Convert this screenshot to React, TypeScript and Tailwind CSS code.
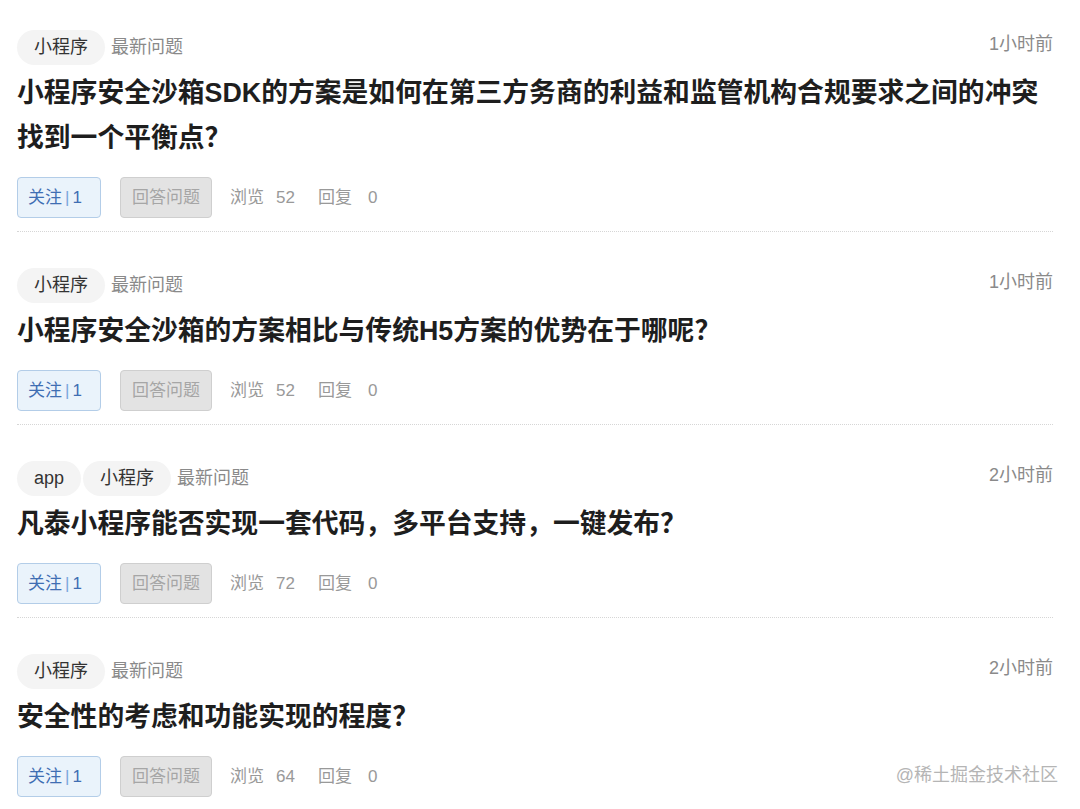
import React from "react";

type Question = {
  id: number;
  tags: string[];
  title: React.ReactNode;
  time: string;
  follow: number;
  views: number;
  replies: number;
};

const questions: Question[] = [
  {
    id: 1,
    tags: ["小程序"],
    title: (
      <>
        小程序安全沙箱SDK的方案是如何在第三方务商的利益和监管机构合规要求之间的冲突
        <br />
        找到一个平衡点？
      </>
    ),
    time: "1小时前",
    follow: 1,
    views: 52,
    replies: 0,
  },
  {
    id: 2,
    tags: ["小程序"],
    title: "小程序安全沙箱的方案相比与传统H5方案的优势在于哪呢？",
    time: "1小时前",
    follow: 1,
    views: 52,
    replies: 0,
  },
  {
    id: 3,
    tags: ["app", "小程序"],
    title: "凡泰小程序能否实现一套代码，多平台支持，一键发布？",
    time: "2小时前",
    follow: 1,
    views: 72,
    replies: 0,
  },
  {
    id: 4,
    tags: ["小程序"],
    title: "安全性的考虑和功能实现的程度？",
    time: "2小时前",
    follow: 1,
    views: 64,
    replies: 0,
  },
];

const font = {
  fontFamily: '"Liberation Sans", "Noto Sans CJK SC", sans-serif',
};

function QuestionItem({ q, first }: { q: Question; first: boolean }) {
  return (
    <div
      className={`border-b border-dotted border-[#d6d6d6] pb-[13px] ${
        first ? "pt-[30px]" : "pt-[36px]"
      }`}
    >
      <div className="flex items-center justify-between">
        <div className="flex items-center gap-x-[2px]">
          {q.tags.map((t) => (
            <span
              key={t}
              className="h-[35px] px-[17px] rounded-full bg-[#f4f4f4] text-[#333] text-[18px] flex items-center"
            >
              {t}
            </span>
          ))}
          <span className="text-[18px] text-[#8a8a8a] ml-[4px]">最新问题</span>
        </div>
        <span className="text-[18px] text-[#8a8a8a] -mt-[6px]">{q.time}</span>
      </div>

      <h2 className="mt-[6px] text-[26.8px] leading-[45px] font-bold text-[#1e1e1e] whitespace-nowrap">
        {q.title}
      </h2>

      <div className="mt-[16px] flex items-center text-[17px]">
        <button className="h-[41px] w-[84px] pl-[10px] flex items-center rounded-[4px] border border-[#b3cde8] bg-[#eaf3fb] text-[#3f6eb3]">
          关注
          <span className="mx-[3px] text-[#7aa6dc] font-light">|</span>
          {q.follow}
        </button>
        <button className="ml-[19px] h-[41px] w-[92px] flex items-center justify-center rounded-[4px] border border-[#cfcfcf] bg-[#e3e3e3] text-[#a6a6a6]">
          回答问题
        </button>
        <span className="ml-[18px] text-[#999]">浏览</span>
        <span className="ml-[12px] text-[#999]">{q.views}</span>
        <span className="ml-[23px] text-[#999]">回复</span>
        <span className="ml-[16px] text-[#999]">{q.replies}</span>
      </div>
    </div>
  );
}

export default function App() {
  return (
    <div className="relative w-[1080px] h-[809px] bg-white overflow-hidden" style={font}>
      <div className="pl-[17px] pr-[27px]">
        {questions.map((q, i) => (
          <QuestionItem key={q.id} q={q} first={i === 0} />
        ))}
      </div>
      <div className="absolute right-[22px] top-[762px] text-[18px] text-[#b5b5b5]">
        @稀土掘金技术社区
      </div>
    </div>
  );
}
